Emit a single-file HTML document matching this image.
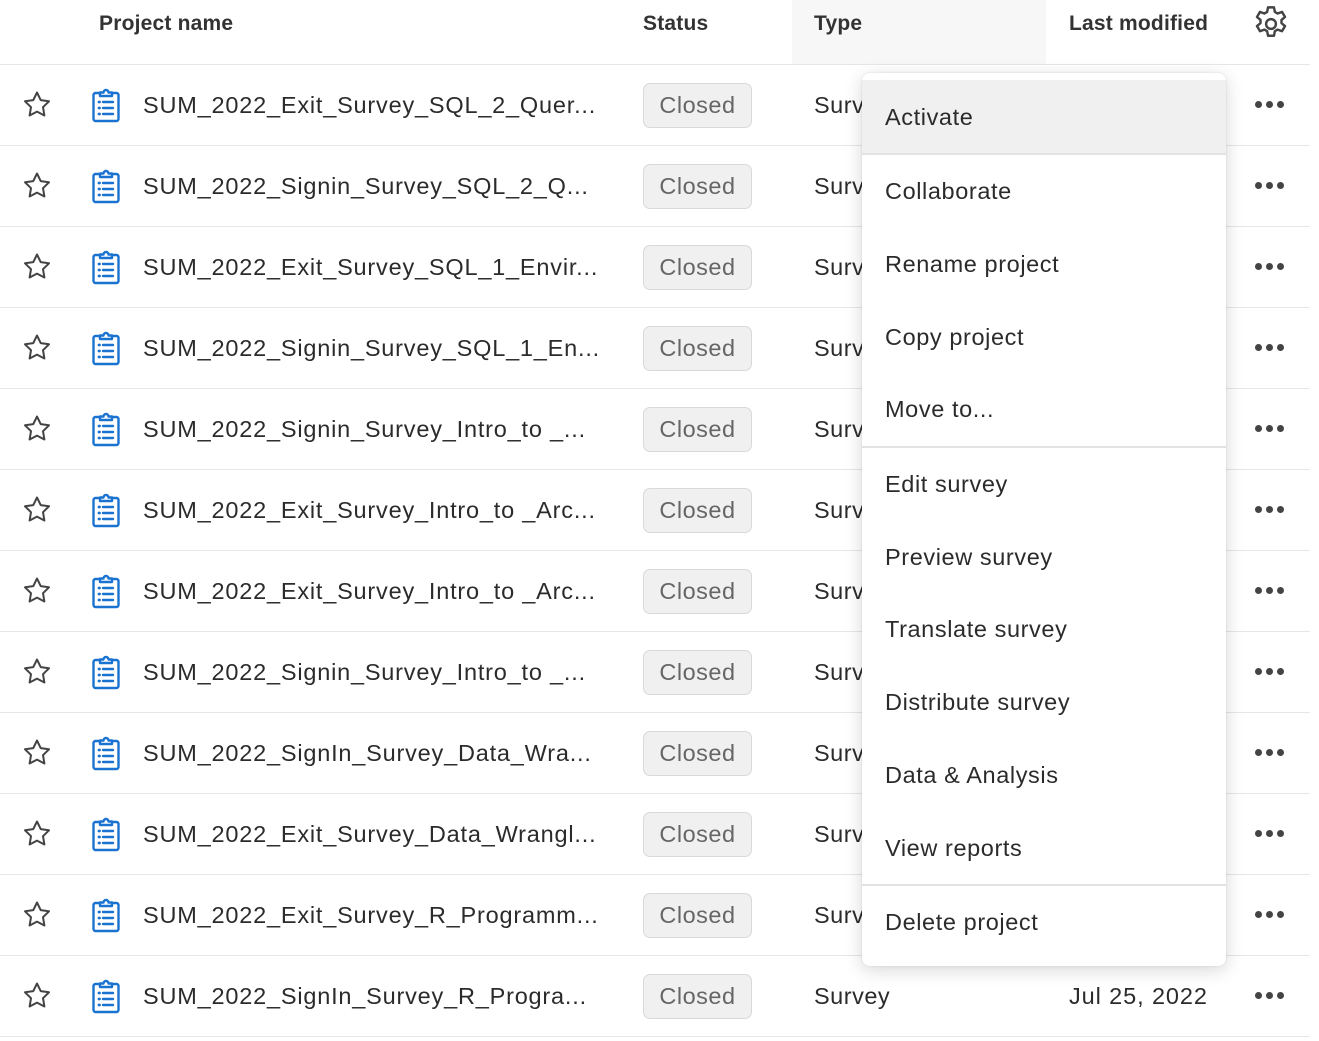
<!DOCTYPE html>
<html><head><meta charset="utf-8"><style>
*{margin:0;padding:0;box-sizing:border-box}
body{width:1319px;height:1041px;background:#fff;font-family:"Liberation Sans",sans-serif;color:#2b2b2b;position:relative;overflow:hidden}
.h{position:absolute;top:0;height:64px;line-height:48px;font-weight:bold;font-size:21px;color:#333;letter-spacing:0.2px}
.typebg{position:absolute;left:792px;top:0;width:254px;height:64px;background:#f7f7f7}
.line{position:absolute;left:0;width:1310px;height:1px;background:#e6e6e6}
.row{position:absolute;left:0;width:1310px;height:81px}
.star{position:absolute;left:21px;top:24px}
.clip{position:absolute;left:89px;top:22px}
.name{position:absolute;left:143px;top:0;line-height:81px;font-size:23.5px;color:#2b2b2b;white-space:nowrap;letter-spacing:0.8px}
.badge{position:absolute;left:643px;top:18px;width:109px;height:45px;border:1px solid #d9d9d9;border-radius:7px;background:#f0f0f0;color:#666;font-size:23.5px;line-height:43px;text-align:center;letter-spacing:0.5px}
.type{position:absolute;left:814px;top:0;line-height:81px;font-size:23.5px;letter-spacing:0.5px}
.date{position:absolute;left:1069px;top:0;line-height:81px;font-size:23.5px;letter-spacing:0.9px}
.dots{position:absolute;left:1255px;top:36px;display:flex;gap:4px}
.dots i{display:block;width:7px;height:7px;border-radius:50%;background:#444}
.menu{position:absolute;left:862px;top:73px;width:364px;height:893px;background:#fff;border-radius:8px;box-shadow:0 4px 18px rgba(0,0,0,.16),0 0 2px rgba(0,0,0,.1)}
.mi{position:absolute;left:23px;font-size:23.5px;line-height:30px;color:#2b2b2b;white-space:nowrap;letter-spacing:0.6px}
.act{position:absolute;left:0;top:7px;width:364px;height:74px;background:#f0f0f1}
.div{position:absolute;left:0;width:364px;height:2px;background:#e3e3e3}
</style></head><body>
<div class="typebg"></div>
<div class="h" style="left:99px">Project name</div>
<div class="h" style="left:643px">Status</div>
<div class="h" style="left:814px">Type</div>
<div class="h" style="left:1069px">Last modified</div>
<svg style="position:absolute;left:1250px;top:3px" width="42" height="42" viewBox="0 0 24 24" fill="none" stroke="#444" stroke-width="1.4" stroke-linejoin="round"><path d="M10.3 2.5h3.4l.5 2.6 1.6.9 2.5-.9 1.7 2.9-2 1.7v1.8l2 1.7-1.7 2.9-2.5-.9-1.6.9-.5 2.6h-3.4l-.5-2.6-1.6-.9-2.5.9-1.7-2.9 2-1.7v-1.8l-2-1.7 1.7-2.9 2.5.9 1.6-.9z"/><circle cx="12" cy="12" r="2.8"/></svg>

<div class="line" style="top:64px"></div>
<div class="line" style="top:145px"></div>
<div class="line" style="top:226px"></div>
<div class="line" style="top:307px"></div>
<div class="line" style="top:388px"></div>
<div class="line" style="top:469px"></div>
<div class="line" style="top:550px"></div>
<div class="line" style="top:631px"></div>
<div class="line" style="top:712px"></div>
<div class="line" style="top:793px"></div>
<div class="line" style="top:874px"></div>
<div class="line" style="top:955px"></div>
<div class="line" style="top:1036px"></div>

<svg width="0" height="0" style="position:absolute"><defs>
<g id="st"><path d="M16 3.5l3.7 7.6 8.3 1.2-6 5.9 1.4 8.3L16 22.6l-7.4 3.9 1.4-8.3-6-5.9 8.3-1.2z" fill="none" stroke="#444" stroke-width="2" stroke-linejoin="round"/></g>
<g id="cl" fill="none" stroke="#1a73d0" stroke-width="2.4" stroke-linejoin="round"><path d="M11 6H6.5a2 2 0 0 0-2 2v24a2 2 0 0 0 2 2h21a2 2 0 0 0 2-2V8a2 2 0 0 0-2-2H23"/><path d="M11 9V5.5h3.5a2.5 2.5 0 0 1 5 0H23V9z"/><path d="M14 15h10M14 21h10M14 27h10" stroke-linecap="round"/><path d="M10 15h.5M10 21h.5M10 27h.5" stroke-linecap="round" stroke-width="2.8"/></g>
</defs></svg>

<div class="row" style="top:65px"><svg class="star" width="32" height="30" viewBox="0 0 32 30"><use href="#st"/></svg><svg class="clip" width="34" height="38" viewBox="0 0 34 38"><use href="#cl"/></svg><div class="name">SUM_2022_Exit_Survey_SQL_2_Quer...</div><div class="badge">Closed</div><div class="type">Survey</div><div class="dots"><i></i><i></i><i></i></div></div>
<div class="row" style="top:146px"><svg class="star" width="32" height="30" viewBox="0 0 32 30"><use href="#st"/></svg><svg class="clip" width="34" height="38" viewBox="0 0 34 38"><use href="#cl"/></svg><div class="name">SUM_2022_Signin_Survey_SQL_2_Q...</div><div class="badge">Closed</div><div class="type">Survey</div><div class="dots"><i></i><i></i><i></i></div></div>
<div class="row" style="top:227px"><svg class="star" width="32" height="30" viewBox="0 0 32 30"><use href="#st"/></svg><svg class="clip" width="34" height="38" viewBox="0 0 34 38"><use href="#cl"/></svg><div class="name">SUM_2022_Exit_Survey_SQL_1_Envir...</div><div class="badge">Closed</div><div class="type">Survey</div><div class="dots"><i></i><i></i><i></i></div></div>
<div class="row" style="top:308px"><svg class="star" width="32" height="30" viewBox="0 0 32 30"><use href="#st"/></svg><svg class="clip" width="34" height="38" viewBox="0 0 34 38"><use href="#cl"/></svg><div class="name">SUM_2022_Signin_Survey_SQL_1_En...</div><div class="badge">Closed</div><div class="type">Survey</div><div class="dots"><i></i><i></i><i></i></div></div>
<div class="row" style="top:389px"><svg class="star" width="32" height="30" viewBox="0 0 32 30"><use href="#st"/></svg><svg class="clip" width="34" height="38" viewBox="0 0 34 38"><use href="#cl"/></svg><div class="name">SUM_2022_Signin_Survey_Intro_to _...</div><div class="badge">Closed</div><div class="type">Survey</div><div class="dots"><i></i><i></i><i></i></div></div>
<div class="row" style="top:470px"><svg class="star" width="32" height="30" viewBox="0 0 32 30"><use href="#st"/></svg><svg class="clip" width="34" height="38" viewBox="0 0 34 38"><use href="#cl"/></svg><div class="name">SUM_2022_Exit_Survey_Intro_to _Arc...</div><div class="badge">Closed</div><div class="type">Survey</div><div class="dots"><i></i><i></i><i></i></div></div>
<div class="row" style="top:551px"><svg class="star" width="32" height="30" viewBox="0 0 32 30"><use href="#st"/></svg><svg class="clip" width="34" height="38" viewBox="0 0 34 38"><use href="#cl"/></svg><div class="name">SUM_2022_Exit_Survey_Intro_to _Arc...</div><div class="badge">Closed</div><div class="type">Survey</div><div class="dots"><i></i><i></i><i></i></div></div>
<div class="row" style="top:632px"><svg class="star" width="32" height="30" viewBox="0 0 32 30"><use href="#st"/></svg><svg class="clip" width="34" height="38" viewBox="0 0 34 38"><use href="#cl"/></svg><div class="name">SUM_2022_Signin_Survey_Intro_to _...</div><div class="badge">Closed</div><div class="type">Survey</div><div class="dots"><i></i><i></i><i></i></div></div>
<div class="row" style="top:713px"><svg class="star" width="32" height="30" viewBox="0 0 32 30"><use href="#st"/></svg><svg class="clip" width="34" height="38" viewBox="0 0 34 38"><use href="#cl"/></svg><div class="name">SUM_2022_SignIn_Survey_Data_Wra...</div><div class="badge">Closed</div><div class="type">Survey</div><div class="dots"><i></i><i></i><i></i></div></div>
<div class="row" style="top:794px"><svg class="star" width="32" height="30" viewBox="0 0 32 30"><use href="#st"/></svg><svg class="clip" width="34" height="38" viewBox="0 0 34 38"><use href="#cl"/></svg><div class="name">SUM_2022_Exit_Survey_Data_Wrangl...</div><div class="badge">Closed</div><div class="type">Survey</div><div class="dots"><i></i><i></i><i></i></div></div>
<div class="row" style="top:875px"><svg class="star" width="32" height="30" viewBox="0 0 32 30"><use href="#st"/></svg><svg class="clip" width="34" height="38" viewBox="0 0 34 38"><use href="#cl"/></svg><div class="name">SUM_2022_Exit_Survey_R_Programm...</div><div class="badge">Closed</div><div class="type">Survey</div><div class="dots"><i></i><i></i><i></i></div></div>
<div class="row" style="top:956px"><svg class="star" width="32" height="30" viewBox="0 0 32 30"><use href="#st"/></svg><svg class="clip" width="34" height="38" viewBox="0 0 34 38"><use href="#cl"/></svg><div class="name">SUM_2022_SignIn_Survey_R_Progra...</div><div class="badge">Closed</div><div class="type">Survey</div><div class="date">Jul 25, 2022</div><div class="dots"><i></i><i></i><i></i></div></div>

<div class="menu">
<div class="act"></div>
<div class="mi" style="top:29px">Activate</div>
<div class="div" style="top:80px"></div>
<div class="mi" style="top:103px">Collaborate</div>
<div class="mi" style="top:176px">Rename project</div>
<div class="mi" style="top:249px">Copy project</div>
<div class="mi" style="top:321px">Move to...</div>
<div class="div" style="top:373px"></div>
<div class="mi" style="top:396px">Edit survey</div>
<div class="mi" style="top:469px">Preview survey</div>
<div class="mi" style="top:541px">Translate survey</div>
<div class="mi" style="top:614px">Distribute survey</div>
<div class="mi" style="top:687px">Data &amp; Analysis</div>
<div class="mi" style="top:760px">View reports</div>
<div class="div" style="top:811px"></div>
<div class="mi" style="top:834px">Delete project</div>
</div>
</body></html>
